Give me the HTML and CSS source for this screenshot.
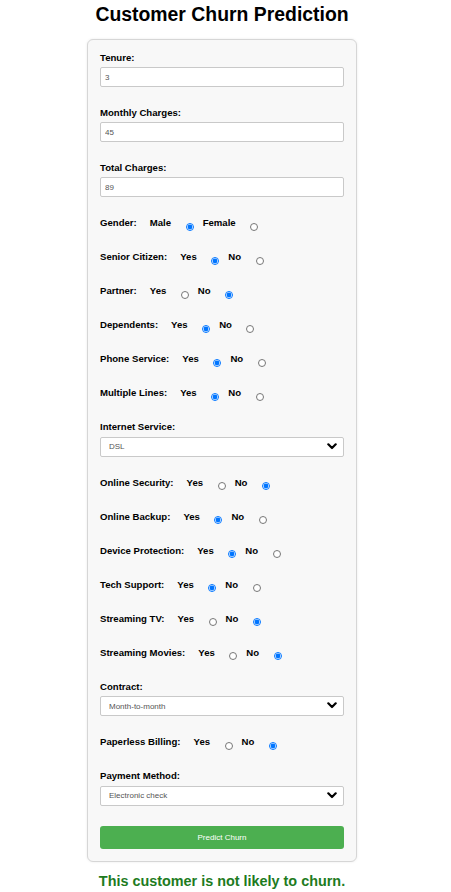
FILE: index.html
```html
<!DOCTYPE html>
<html lang="en">
<head>
<meta charset="utf-8">
<title>Customer Churn Prediction</title>
<link rel="stylesheet" href="styles.css">
</head>
<body>
<main class="page">
  <h1 class="title">Customer Churn Prediction</h1>
  <form class="card">
    <div class="field">
      <label class="label" for="tenure">Tenure:</label>
      <input class="text-input" id="tenure" type="text" value="3">
    </div>
    <div class="field">
      <label class="label" for="monthly">Monthly Charges:</label>
      <input class="text-input" id="monthly" type="text" value="45">
    </div>
    <div class="field">
      <label class="label" for="total">Total Charges:</label>
      <input class="text-input" id="total" type="text" value="89">
    </div>

    <div class="radio-row">
      <span class="label rlabel">Gender:</span>
      <label class="opt" for="g1">Male</label><input class="radio" id="g1" type="radio" name="gender" checked>
      <label class="opt" for="g2">Female</label><input class="radio" id="g2" type="radio" name="gender">
    </div>
    <div class="radio-row">
      <span class="label rlabel">Senior Citizen:</span>
      <label class="opt" for="s1">Yes</label><input class="radio" id="s1" type="radio" name="senior" checked>
      <label class="opt" for="s2">No</label><input class="radio" id="s2" type="radio" name="senior">
    </div>
    <div class="radio-row">
      <span class="label rlabel">Partner:</span>
      <label class="opt" for="p1">Yes</label><input class="radio" id="p1" type="radio" name="partner">
      <label class="opt" for="p2">No</label><input class="radio" id="p2" type="radio" name="partner" checked>
    </div>
    <div class="radio-row">
      <span class="label rlabel">Dependents:</span>
      <label class="opt" for="d1">Yes</label><input class="radio" id="d1" type="radio" name="dep" checked>
      <label class="opt" for="d2">No</label><input class="radio" id="d2" type="radio" name="dep">
    </div>
    <div class="radio-row">
      <span class="label rlabel">Phone Service:</span>
      <label class="opt" for="ph1">Yes</label><input class="radio" id="ph1" type="radio" name="phone" checked>
      <label class="opt" for="ph2">No</label><input class="radio" id="ph2" type="radio" name="phone">
    </div>
    <div class="radio-row">
      <span class="label rlabel">Multiple Lines:</span>
      <label class="opt" for="m1">Yes</label><input class="radio" id="m1" type="radio" name="multi" checked>
      <label class="opt" for="m2">No</label><input class="radio" id="m2" type="radio" name="multi">
    </div>

    <div class="field">
      <label class="label" for="internet">Internet Service:</label>
      <div class="select-wrap">
        <select class="select" id="internet">
          <option>DSL</option>
          <option>Fiber optic</option>
          <option>No</option>
        </select>
        <svg class="chevron" width="10" height="7" viewBox="0 0 10 7" aria-hidden="true"><polyline points="1.3,1.3 5,5 8.7,1.3" fill="none" stroke="#000" stroke-width="2.2" stroke-linecap="round" stroke-linejoin="round"/></svg>
      </div>
    </div>

    <div class="radio-row">
      <span class="label rlabel">Online Security:</span>
      <label class="opt" for="os1">Yes</label><input class="radio" id="os1" type="radio" name="osec">
      <label class="opt" for="os2">No</label><input class="radio" id="os2" type="radio" name="osec" checked>
    </div>
    <div class="radio-row">
      <span class="label rlabel">Online Backup:</span>
      <label class="opt" for="ob1">Yes</label><input class="radio" id="ob1" type="radio" name="obak" checked>
      <label class="opt" for="ob2">No</label><input class="radio" id="ob2" type="radio" name="obak">
    </div>
    <div class="radio-row">
      <span class="label rlabel">Device Protection:</span>
      <label class="opt" for="dp1">Yes</label><input class="radio" id="dp1" type="radio" name="dprot" checked>
      <label class="opt" for="dp2">No</label><input class="radio" id="dp2" type="radio" name="dprot">
    </div>
    <div class="radio-row">
      <span class="label rlabel">Tech Support:</span>
      <label class="opt" for="ts1">Yes</label><input class="radio" id="ts1" type="radio" name="tech" checked>
      <label class="opt" for="ts2">No</label><input class="radio" id="ts2" type="radio" name="tech">
    </div>
    <div class="radio-row">
      <span class="label rlabel">Streaming TV:</span>
      <label class="opt" for="tv1">Yes</label><input class="radio" id="tv1" type="radio" name="stv">
      <label class="opt" for="tv2">No</label><input class="radio" id="tv2" type="radio" name="stv" checked>
    </div>
    <div class="radio-row">
      <span class="label rlabel">Streaming Movies:</span>
      <label class="opt" for="sm1">Yes</label><input class="radio" id="sm1" type="radio" name="smov">
      <label class="opt" for="sm2">No</label><input class="radio" id="sm2" type="radio" name="smov" checked>
    </div>

    <div class="field">
      <label class="label" for="contract">Contract:</label>
      <div class="select-wrap">
        <select class="select" id="contract">
          <option>Month-to-month</option>
          <option>One year</option>
          <option>Two year</option>
        </select>
        <svg class="chevron" width="10" height="7" viewBox="0 0 10 7" aria-hidden="true"><polyline points="1.3,1.3 5,5 8.7,1.3" fill="none" stroke="#000" stroke-width="2.2" stroke-linecap="round" stroke-linejoin="round"/></svg>
      </div>
    </div>

    <div class="radio-row">
      <span class="label rlabel">Paperless Billing:</span>
      <label class="opt" for="pb1">Yes</label><input class="radio" id="pb1" type="radio" name="paper">
      <label class="opt" for="pb2">No</label><input class="radio" id="pb2" type="radio" name="paper" checked>
    </div>

    <div class="field">
      <label class="label" for="payment">Payment Method:</label>
      <div class="select-wrap">
        <select class="select" id="payment">
          <option>Electronic check</option>
          <option>Mailed check</option>
          <option>Bank transfer (automatic)</option>
          <option>Credit card (automatic)</option>
        </select>
        <svg class="chevron" width="10" height="7" viewBox="0 0 10 7" aria-hidden="true"><polyline points="1.3,1.3 5,5 8.7,1.3" fill="none" stroke="#000" stroke-width="2.2" stroke-linecap="round" stroke-linejoin="round"/></svg>
      </div>
    </div>

    <button class="submit" type="button">Predict Churn</button>
  </form>
  <p class="result">This customer is not likely to churn.</p>
</main>
</body>
</html>
```

FILE: styles.css
```css
* {
  box-sizing: border-box;
}

html, body {
  margin: 0;
  padding: 0;
  background: #ffffff;
}

body {
  font-family: "Liberation Sans", Arial, sans-serif;
  color: #000;
}

.page {
  width: 444px;
  padding-top: 3px;
  display: flex;
  flex-direction: column;
  align-items: center;
}

.title {
  margin: 0 0 14px;
  font-size: 19.4px;
  font-weight: bold;
  line-height: 22px;
  text-align: center;
}

.card {
  width: 270px;
  padding: 12px;
  background: #f8f8f8;
  border: 1px solid #d6d6d6;
  border-radius: 6px;
  box-shadow: 0 0 3px rgba(0, 0, 0, 0.08);
}

.field {
  display: flex;
  flex-direction: column;
  margin-bottom: 20px;
}

.label {
  display: block;
  font-size: 9.6px;
  line-height: 11px;
  font-weight: bold;
  margin-bottom: 4px;
}

.text-input {
  display: block;
  width: 100%;
  height: 20px;
  padding: 0 4px;
  font-family: "Liberation Sans", Arial, sans-serif;
  font-size: 8px;
  color: #555;
  background: #fff;
  border: 1px solid #c9c9c9;
  border-radius: 2px;
  outline: none;
}

.select-wrap {
  position: relative;
  margin-top: 0.5px;
}

.select {
  display: block;
  width: 100%;
  height: 20px;
  padding: 0 8px;
  font-family: "Liberation Sans", Arial, sans-serif;
  font-size: 8px;
  color: #555;
  background: #fff;
  border: 1px solid #c9c9c9;
  border-radius: 2px;
  appearance: none;
  -webkit-appearance: none;
  outline: none;
}

.chevron {
  position: absolute;
  right: 7px;
  top: 6px;
  pointer-events: none;
}

.radio-row {
  display: flex;
  align-items: flex-start;
  height: 14px;
  margin-bottom: 20px;
}

.rlabel {
  margin: 0 13px 0 0;
}

.opt {
  font-size: 9.6px;
  line-height: 11px;
  font-weight: bold;
  margin-right: 14.5px;
}

.radio {
  width: 8px;
  height: 8px;
  margin: 5.5px 9px 0 0;
  flex: none;
}

.submit {
  display: block;
  width: 100%;
  height: 23px;
  margin-top: 0;
  padding: 0;
  background: #4caf50;
  color: #fff;
  border: none;
  border-radius: 3px;
  font-family: "Liberation Sans", Arial, sans-serif;
  font-size: 8px;
}

.result {
  margin: 11px 0 0;
  font-size: 14.4px;
  line-height: 17px;
  font-weight: bold;
  color: #1e7b1e;
  text-align: center;
}
```
